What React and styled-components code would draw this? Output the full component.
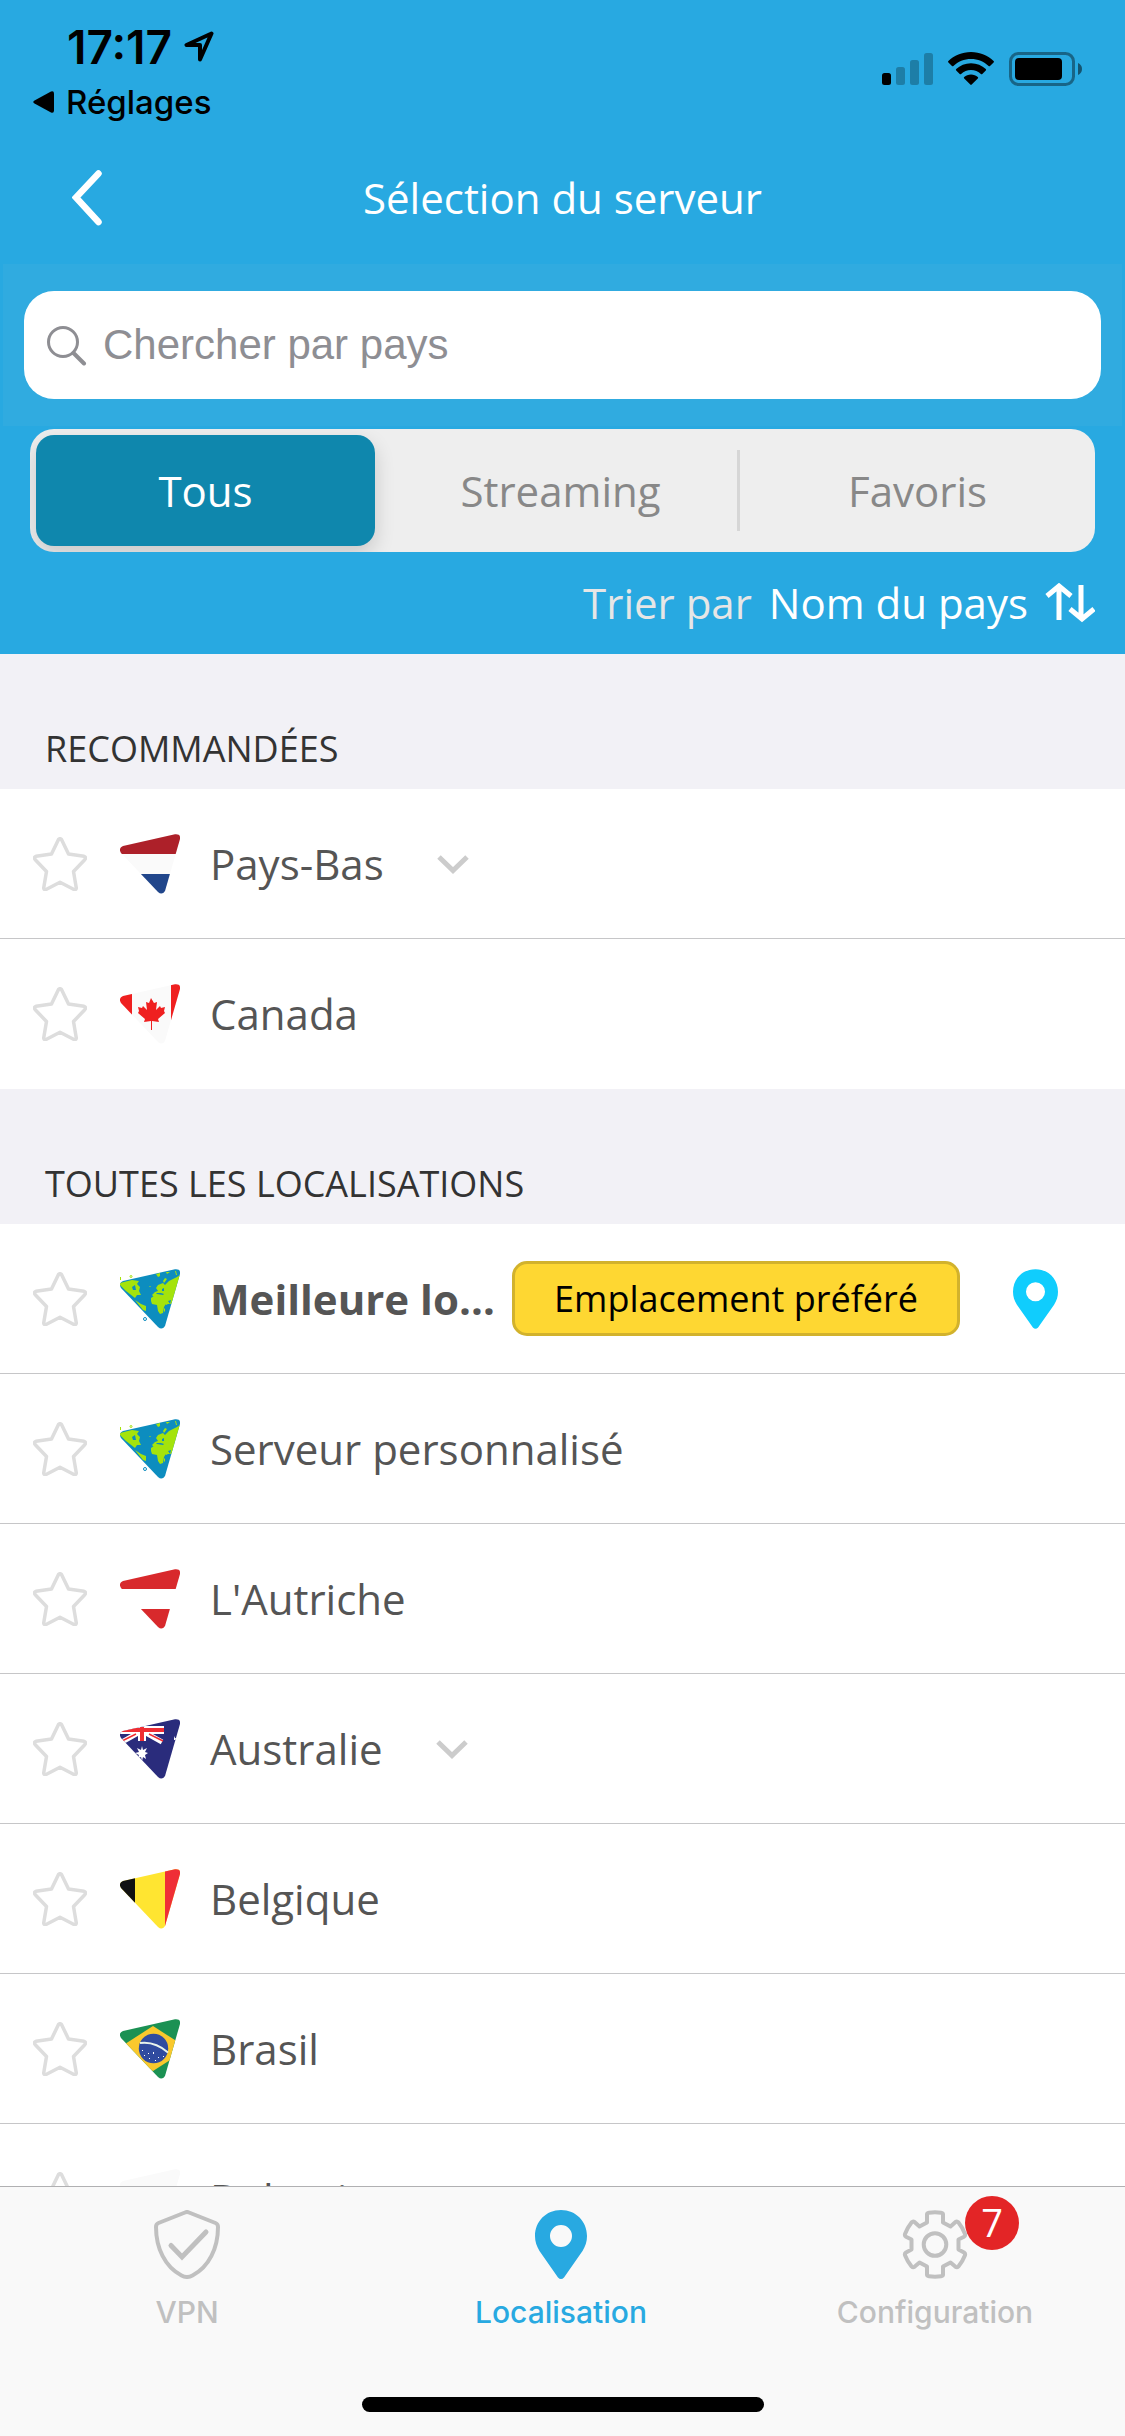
/* eslint-disable react/prop-types */
import {useId, useState} from "react";
import styled, {createGlobalStyle} from "styled-components";

const GlobalStyle = createGlobalStyle`
  *, *::before, *::after {
    box-sizing: border-box;
  }

  body {
    margin: 0;
    font-family: "Open Sans", "Noto Sans", sans-serif;
    font-size: 42px;
    line-height: 58px;
    color: #555555;
  }

  button, input {
    font: inherit;
    color: inherit;
    border: none;
    background: none;
    padding: 0;
    margin: 0;
  }

  svg {
    display: block;
    flex: none;
  }
`;

const Screen = styled.div`
  display: flex;
  flex-direction: column;
  height: 100vh;
  background-color: #ffffff;
`;

const Header = styled.header`
  flex: none;
  background-color: #28a9e1;
  color: #ffffff;
`;

const StatusBar = styled.div`
  display: flex;
  justify-content: space-between;
  align-items: flex-start;
  padding: 20px 43px 0 33px;
  color: #000000;
  font-family: Inter, "Liberation Sans", sans-serif;
`;

const Clock = styled.div`
  display: flex;
  align-items: center;
  gap: 12px;
  padding-left: 34px;
  font-size: 46px;
  font-weight: 600;
  line-height: 54px;
`;

const BackToApp = styled.a`
  display: flex;
  align-items: center;
  gap: 12px;
  margin-top: 8px;
  font-size: 33px;
  font-weight: 500;
  line-height: 40px;
  color: inherit;
  text-decoration: none;
`;

const Signals = styled.div`
  display: flex;
  align-items: center;
  gap: 15px;
  padding-top: 32px;
`;

const NavBar = styled.div`
  display: grid;
  grid-template-columns: 1fr auto 1fr;
  align-items: center;
  height: 142px;
  padding: 10px 72px 0;
`;

const BackButton = styled.button`
  justify-self: start;
`;

const Title = styled.h1`
  margin: 0;
  font-size: 42px;
  font-weight: 400;
`;

const SearchPanel = styled.div`
  margin: 0 3px;
  padding: 27px 21px;
  background-color: #30abe0;
`;

const SearchBox = styled.label`
  display: flex;
  align-items: center;
  gap: 16px;
  height: 108px;
  padding: 0 22px;
  border-radius: 30px;
  background-color: #ffffff;
`;

const SearchInput = styled.input`
  flex: 1;
  min-width: 0;
  outline: none;
  font-family: "Liberation Sans", Arial, sans-serif;
  color: #333333;

  &::placeholder {
    color: #8e8e93;
    opacity: 1;
  }
`;

const Segments = styled.div`
  display: grid;
  grid-template-columns: repeat(3, 1fr);
  height: 123px;
  margin: 3px 30px 0;
  border-radius: 24px;
  overflow: hidden;
  background-color: #eeeeee;
`;

const Segment = styled.button`
  margin: 6px 10px 6px 6px;
  border-radius: 18px;
  color: ${(props) => (props.$active ? "#ffffff" : "#888888")};
  background-color: ${(props) => (props.$active ? "#0f87ad" : "transparent")};
  box-shadow: ${(props) => (props.$active ? "0 8px 20px rgba(0, 0, 0, 0.16)" : "none")};
`;

const SegmentCell = styled.div`
  display: grid;
  background: ${(props) => (props.$divided ? "linear-gradient(#d6d6d6, #d6d6d6) right center / 3px 81px no-repeat" : "none")};

  &:last-child {
    padding-left: 4px;
  }
`;

const SortRow = styled.div`
  display: flex;
  justify-content: flex-end;
  align-items: center;
  height: 102px;
  padding: 0 30px;
`;

const SortButton = styled.button`
  display: flex;
  align-items: center;
  gap: 17px;
`;

const SortLabel = styled.span`
  color: #e6e6e6;
`;

const List = styled.main`
  flex: 1;
  min-height: 0;
  overflow: hidden;
`;

const SectionTitle = styled.h2`
  display: flex;
  align-items: flex-end;
  height: 135px;
  margin: 0;
  padding: 0 45px 15px;
  background-color: #f2f1f6;
  color: #333333;
  font-size: 36px;
  font-weight: 400;
  line-height: 50px;
  text-transform: uppercase;
`;

const Rows = styled.ul`
  margin: 0;
  padding: 0;
  list-style: none;
`;

const Row = styled.li`
  display: flex;
  align-items: center;
  height: 150px;
  padding: 0 67px 0 33px;
  border-bottom: 1px solid #c6c6c8;

  &:last-child {
    border-bottom-color: transparent;
  }
`;

const StarButton = styled.button`
  margin-right: 33px;
`;

const Name = styled.span`
  margin-left: 30px;
  font-weight: ${(props) => (props.$bold ? 700 : 400)};
  white-space: nowrap;
`;

const ExpandButton = styled.button`
  margin-left: 53px;
`;

const Preferred = styled.button`
  height: 75px;
  margin-left: auto;
  margin-right: 53px;
  padding: 0 39px;
  border: 3px solid #d2b22c;
  border-radius: 15px;
  background-color: #fed732;
  color: #000000;
  font-size: 36px;
  line-height: 50px;
`;

const TabBar = styled.nav`
  flex: none;
  border-top: 1px solid #b0b0b2;
  background-color: #f9f9f9;
  padding: 23px 0 24px;
`;

const Tabs = styled.div`
  display: grid;
  grid-template-columns: repeat(3, 1fr);
  padding-right: 3px;
`;

const Tab = styled.a`
  display: flex;
  flex-direction: column;
  align-items: center;
  gap: 15px;
  color: ${(props) => (props.$active ? "#28a9e1" : "#c0c0c0")};
  font-family: Inter, "Liberation Sans", sans-serif;
  font-size: 30px;
  font-weight: 500;
  line-height: 36px;
  text-decoration: none;
`;

const TabIcon = styled.span`
  position: relative;
`;

const Badge = styled.span`
  position: absolute;
  left: 63px;
  top: -14px;
  width: 54px;
  height: 54px;
  border-radius: 50%;
  background-color: #e32526;
  color: #ffffff;
  font-family: "Open Sans", sans-serif;
  font-size: 38px;
  font-weight: 400;
  line-height: 52px;
  text-align: center;
`;

const HomeIndicator = styled.div`
  width: 402px;
  height: 15px;
  margin: 67px auto 0;
  border-radius: 8px;
  background-color: #000000;
`;

function LocationArrow() {
  return (
    <svg width="30" height="32" viewBox="0 0 30 32" fill="none" stroke="currentColor" strokeWidth="4" strokeLinejoin="round">
      <path d="M27.500 2.500 2.500 14H16v14.500Z" />
    </svg>
  );
}

function CellularIcon() {
  return (
    <svg width="51" height="34" viewBox="0 0 51 34">
      <rect x="0" y="21" width="9" height="12" rx="2.5" />
      <g opacity="0.25">
        <rect x="14" y="15" width="9" height="18" rx="2.5" />
        <rect x="28" y="8" width="9" height="25" rx="2.5" />
        <rect x="42" y="1" width="9" height="32" rx="2.5" />
      </g>
    </svg>
  );
}

function WifiIcon() {
  return (
    <svg width="46" height="34" viewBox="0 0 46 34">
      <path d="M23 0C14 0 6 3.500 .4 9.100a1 1 0 0 0 0 1.400L4 14a1 1 0 0 0 1.400 0C10 9.600 16.200 7 23 7s13 2.600 17.600 7A1 1 0 0 0 42 14l3.600-3.500a1 1 0 0 0 0-1.400C40 3.500 32 0 23 0Z" />
      <path d="M23 11.200c-5.800 0-11 2.200-14.800 5.900a1 1 0 0 0 0 1.400l3.500 3.500a1 1 0 0 0 1.400 0 14.300 14.300 0 0 1 19.800 0 1 1 0 0 0 1.400 0l3.500-3.500a1 1 0 0 0 0-1.400C34 13.400 28.800 11.200 23 11.200Z" />
      <path d="M23 22.500c-2.700 0-5 .9-6.800 2.400a1 1 0 0 0 0 1.500l6.100 6.200a1 1 0 0 0 1.400 0l6.100-6.200a1 1 0 0 0 0-1.500C28 23.400 25.700 22.500 23 22.500Z" />
    </svg>
  );
}

function BatteryIcon() {
  return (
    <svg width="73" height="34" viewBox="0 0 73 34">
      <rect x="1.500" y="1.500" width="63" height="31" rx="8" fill="none" stroke="#000000" strokeWidth="3" opacity="0.4" />
      <rect x="6" y="6" width="47" height="22" rx="4" />
      <path d="M69 11c2.600 1 4 3.400 4 6s-1.400 5-4 6Z" opacity="0.5" />
    </svg>
  );
}

function SearchIcon() {
  return (
    <svg width="41" height="41" viewBox="0 0 41 41" fill="none" stroke="#8e8e93" strokeLinecap="round">
      <circle cx="17" cy="17" r="14.500" strokeWidth="3" />
      <path d="m27.500 28 10.500 10.500" strokeWidth="4" />
    </svg>
  );
}

function SortIcon() {
  return (
    <svg width="50" height="40" viewBox="0 0 50 40" fill="none" stroke="currentColor" strokeWidth="5">
      <path d="M14 37V4M2 13 14 3l12 10M36 2v33M25 26l12 10 12-10" />
    </svg>
  );
}

function StarIcon() {
  return (
    <svg width="54" height="54" viewBox="0 0 54 54" fill="none" stroke="#dddddd" strokeWidth="3.5" strokeLinejoin="round">
      <path d="M25.500 2.500Q27 .8 28.500 2.500L35.500 17 51 19.300Q54 20.500 51.500 23L40.500 34.500 43.300 51Q43 53.500 40.500 52.200L27 45.300 13.500 52.200Q11 53.500 10.700 51L13.500 34.500 2.500 23Q0 20.500 3 19.300L18.500 17Z" />
    </svg>
  );
}

function ChevronDown() {
  return (
    <svg width="32" height="22" viewBox="0 0 32 22" fill="none" stroke="#cccccc" strokeWidth="5">
      <path d="m2 4 14 13.500L30 4" />
    </svg>
  );
}

function PinIcon({width, height, color}) {
  return (
    <svg width={width} height={height} viewBox="0 0 52 69">
      <path
        fill={color}
        fillRule="evenodd"
        d="M26 0C11 0 0 11.500 0 26c0 5.500 1.500 10 4.500 15L23 67.500q3 3 6 0L47.500 41c3-5 4.500-9.500 4.500-15C52 11.500 41 0 26 0Zm0 15a11 11 0 1 1 0 22 11 11 0 0 1 0-22Z"
      />
    </svg>
  );
}

function ShieldIcon() {
  return (
    <svg width="66" height="69" viewBox="0 0 66 69" fill="none" stroke="currentColor" strokeLinecap="round">
      <path d="M31 2.500q2-1 4 0L61.500 13q2.500 1 2.500 4C64 38 55 57 38.500 65.500q-5.500 3-11 0C11 57 2 38 2 17q0-3 2.500-4Z" strokeWidth="4" />
      <path d="m17 35.500 11 11.500 24-25" strokeWidth="5" />
    </svg>
  );
}

function GearIcon() {
  return (
    <svg width="66" height="69" viewBox="0 0 66 69" fill="none" stroke="currentColor" strokeWidth="4" strokeLinejoin="round">
      <path d="M25 4.500Q25 3 27 2.700q6-.8 12 0 2 .3 2 1.800V12.500l7.500 4 5-4.500q1.500-1 3 .5 4 5 6.500 11.500.5 2-1 2.800L56.500 29.500v10l5.500 3q1.500 1 1 2.800-2.500 6.500-6.500 11-1.500 1.500-3 .5l-5-4.300L41 56.500v8q0 1.500-2 1.800-6 .8-12 0-2-.3-2-1.800v-8l-7.500-4-5 4.300q-1.500 1-3-.5-4-4.500-6.500-11-.5-1.800 1-2.800l5.500-3v-10L4 26.800q-1.500-.8-1-2.800 2.500-6.500 6.500-11.500 1.500-1.500 3-.5l5 4.500 7.500-4Z" />
      <circle cx="33" cy="34.500" r="11.300" />
    </svg>
  );
}

const flags = {
  netherlands: (
    <>
      <path fill="#fafafa" d="M0 0h60v60H0z" />
      <path fill="#ad2029" d="M0 0h60v20H0z" />
      <path fill="#21468b" d="M0 40h60v20H0z" />
    </>
  ),
  austria: (
    <>
      <path fill="#ffffff" d="M0 0h60v60H0z" />
      <path fill="#d8292c" d="M0 0h60v20H0zM0 40h60v20H0z" />
    </>
  ),
  canada: (
    <>
      <path fill="#fafafa" d="M0 0h60v60H0z" />
      <path fill="#ef2020" d="M0 0h12v60H0zM51 0h9v60h-9z" />
      <path
        fill="#ef2020"
        d="m31 14 3 5 3-1-1 8 4-4 1 2 4-1-1 4 1 2-7 6 1 3-7-1v9h-1v-9l-7 1 1-3-7-6 1-2-1-4 4 1 1-2 4 4-1-8 3 1Z"
      />
    </>
  ),
  australia: (
    <>
      <path fill="#2a2c7c" d="M0 0h60v60H0z" />
      <path fill="#ffffff" d="M0 7h44v8H0zM18 7h8v15h-8z" />
      <path stroke="#ffffff" strokeWidth="5" d="m2 23 16-9M42 23l-16-9" />
      <path stroke="#ef2d33" strokeWidth="1.500" d="m2 22 14-7M43 22l-14-7" />
      <path fill="#ef2d33" d="M0 9h44v4H0zM20 8h4v14h-4z" />
      <path fill="#ffffff" d="m22 27 1 4 4-2-2 4 3 1-3 2 1 4-3-2-1 4-1-4-4 2 2-4-4-2 4-1-2-4 4 2ZM54 17l1 2 3 0-2 2-2 0Z" />
    </>
  ),
  belgium: (
    <>
      <path fill="#ffe531" d="M0 0h60v60H0z" />
      <path fill="#111111" d="M0 0h15v60H0z" />
      <path fill="#ef2f36" d="M45 0h15v60H45z" />
    </>
  ),
  brazil: (
    <>
      <path fill="#1b9153" d="M0 0h60v60H0z" />
      <path fill="#f9c82d" d="M33 7 68 29.500 33 52-2 29.500Z" />
      <circle cx="33.500" cy="29.500" r="14.700" fill="#304b9f" />
      <path fill="none" stroke="#e8f3ec" strokeWidth="2" d="M20 24q15-2 28 9.500" />
      <path fill="#ffffff" d="M22 31h1v1h-1zM28 34h1v1h-1zM33 33h1v2h-1zM38 38h1v1h-1zM43 37h1v1h-1zM29 39h1v1h-1zM35 41h1v1h-1zM24 36h1v1h-1z" />
    </>
  ),
  world: (
    <>
      <path fill="#0d8dbf" d="M0 0h60v60H0z" />
      <g fill="#a4e30c">
        <path d="M0 14 12 11l7 1-2 3 3 3-1 4 2 4-4 0-2 3L6 22 0 16Z" />
        <path d="m15 31 6 4 5 2 0 5-3-1Z" />
        <path d="m36 5 4-1 0 3-2 1ZM46 3l4 0-3 2ZM43 12l2-3 2 1-3 4Z" />
        <path d="m36 19 2-3 5-2 2 2 4-4 8-4 3-2v14l-4 8-3 4-2 3-3 0-2 1-3-4-3-3-5 0-3-3 3-3 3-1Z" />
        <path d="m31 29 3-2 5 0 5 2 3 4-3 5-1 6-3 1-2-3-1-6-5-1-1-3Z" />
        <path d="m44 40 1-1 0 3-1 1ZM55 2l1 0 1 4-1 0ZM29 17l2 0-1 1Z" />
      </g>
      <path fill="#0d8dbf" d="m12 18 3-2 1 5-3 0ZM36 24l5 0 3 1-1 1-6-1ZM42 20l2-1 0 3-2 0ZM48 32l3-1-1 4Z" />
    </>
  ),
  bulgaria: <path fill="#fafafa" d="M0 0h60v60H0z" />,
};

function Flag({country}) {
  const clip = useId();

  return (
    <svg width="60" height="60" viewBox="0 0 60 60" aria-hidden="true">
      <clipPath id={clip}>
        <path d="M3 12 55 .2q6-.5 5 4.800L45 57q-3 4.500-7 1L1 19q-3-5 2-7Z" />
      </clipPath>
      <g clipPath={`url(#${clip})`}>{flags[country]}</g>
      {country === "world" && (
        <g fill="none">
          <circle cx="11" cy="7.500" r="1" stroke="#a4e30c" />
          <path d="M.5 8v3" stroke="#a4e30c" />
          <circle cx="25" cy="50" r="1.500" stroke="#0d8dbf" />
        </g>
      )}
    </svg>
  );
}

const segments = ["Tous", "Streaming", "Favoris"];

const recommended = [
  {name: "Pays-Bas", country: "netherlands", expandable: true},
  {name: "Canada", country: "canada"},
];

const locations = [
  {name: "Meilleure lo…", country: "world", preferred: true},
  {name: "Serveur personnalisé", country: "world"},
  {name: "L'Autriche", country: "austria"},
  {name: "Australie", country: "australia", expandable: true},
  {name: "Belgique", country: "belgium"},
  {name: "Brasil", country: "brazil"},
  {name: "Bulgarie", country: "bulgaria"},
];

function ServerRow({server}) {
  return (
    <Row>
      <StarButton type="button" aria-label="Ajouter aux favoris">
        <StarIcon />
      </StarButton>
      <Flag country={server.country} />
      <Name $bold={server.preferred}>{server.name}</Name>
      {server.expandable && (
        <ExpandButton type="button" aria-label="Afficher les villes">
          <ChevronDown />
        </ExpandButton>
      )}
      {server.preferred && (
        <>
          <Preferred type="button">Emplacement préféré</Preferred>
          <PinIcon width="45" height="60" color="#10cdfd" />
        </>
      )}
    </Row>
  );
}

function Section({title, servers}) {
  return (
    <section>
      <SectionTitle>{title}</SectionTitle>
      <Rows>
        {servers.map((server) => (
          <ServerRow key={server.name} server={server} />
        ))}
      </Rows>
    </section>
  );
}

function App() {
  const [active, setActive] = useState("Tous");
  const [query, setQuery] = useState("");

  return (
    <>
      <GlobalStyle />
      <Screen>
        <Header>
          <StatusBar>
            <div>
              <Clock>
                17:17
                <LocationArrow />
              </Clock>
              <BackToApp href="#reglages">
                <svg width="21" height="22" viewBox="0 0 21 22" fill="currentColor">
                  <path d="M18 .5q3-1 3 2v17q0 3-3 2L1.500 12.500q-2.500-1.500 0-3Z" />
                </svg>
                Réglages
              </BackToApp>
            </div>
            <Signals>
              <CellularIcon />
              <WifiIcon />
              <BatteryIcon />
            </Signals>
          </StatusBar>
          <NavBar>
            <BackButton type="button" aria-label="Retour">
              <svg width="30" height="57" viewBox="0 0 30 57" fill="none" stroke="#ffffff" strokeWidth="6.500" strokeLinecap="round">
                <path d="M26.500 3.500 4 27.500l22.500 24.500" />
              </svg>
            </BackButton>
            <Title>Sélection du serveur</Title>
          </NavBar>
          <SearchPanel>
            <SearchBox>
              <SearchIcon />
              <SearchInput
                type="text"
                aria-label="Chercher par pays"
                placeholder="Chercher par pays"
                value={query}
                onChange={(e) => setQuery(e.target.value)}
              />
            </SearchBox>
          </SearchPanel>
          <Segments>
            {segments.map((label) => (
              <SegmentCell key={label} $divided={label === "Streaming"}>
                <Segment type="button" $active={label === active} onClick={() => setActive(label)}>
                  {label}
                </Segment>
              </SegmentCell>
            ))}
          </Segments>
          <SortRow>
            <SortButton type="button">
              <SortLabel>Trier par</SortLabel>
              <span>Nom du pays</span>
              <SortIcon />
            </SortButton>
          </SortRow>
        </Header>
        <List>
          <Section title="Recommandées" servers={recommended} />
          <Section title="Toutes les localisations" servers={locations} />
        </List>
        <TabBar>
          <Tabs>
            <Tab href="#vpn">
              <TabIcon>
                <ShieldIcon />
              </TabIcon>
              VPN
            </Tab>
            <Tab href="#localisation" $active>
              <TabIcon>
                <PinIcon width="52" height="69" color="currentColor" />
              </TabIcon>
              Localisation
            </Tab>
            <Tab href="#configuration">
              <TabIcon>
                <GearIcon />
                <Badge>7</Badge>
              </TabIcon>
              Configuration
            </Tab>
          </Tabs>
          <HomeIndicator />
        </TabBar>
      </Screen>
    </>
  );
}

export default App;
